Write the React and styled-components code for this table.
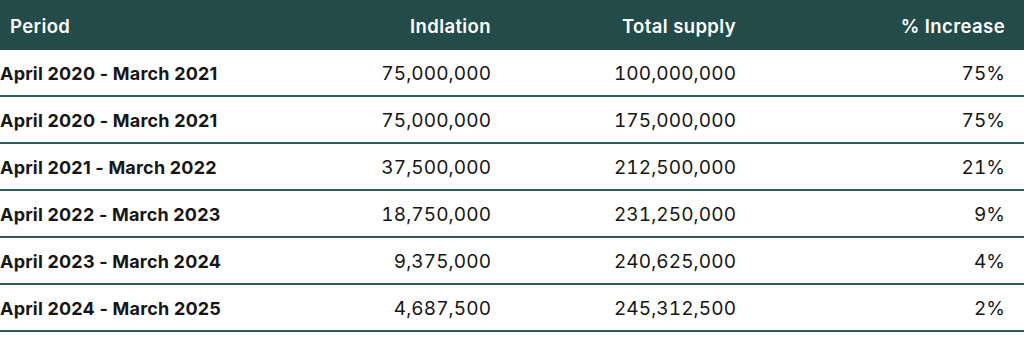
import React from "react";
import styled, { createGlobalStyle } from "styled-components";

const Global = createGlobalStyle`
  html, body { margin: 0; padding: 0; background: #ffffff; }
  body { font-family: Inter, "Noto Sans", sans-serif; -webkit-font-smoothing: antialiased; }
`;

const Table = styled.div`
  width: 1024px;
  display: grid;
  grid-template-columns: 250px 241px 245px 1fr;
`;

const Row = styled.div`
  display: contents;
`;

const HeadCell = styled.div`
  background: #234b49;
  color: #ffffff;
  height: 50px;
  box-sizing: border-box;
  padding-top: 2px;
  display: flex;
  align-items: center;
  justify-content: ${(p) => (p.$left ? "flex-start" : "flex-end")};
  padding-left: ${(p) => (p.$left ? "10px" : "0")};
  padding-right: ${(p) => (p.$last ? "19px" : "0")};
  font-size: 18.5px;
  font-weight: 600;
  letter-spacing: 0.4px;
`;

const Cell = styled.div`
  height: 47px;
  box-sizing: border-box;
  padding-top: 2px;
  border-bottom: 2px solid #2f5d5a;
  display: flex;
  align-items: center;
  justify-content: ${(p) => (p.$left ? "flex-start" : "flex-end")};
  padding-right: ${(p) => (p.$last ? "19px" : "0")};
  color: #161616;
`;

const Label = styled.span`
  font-size: 18px;
  font-weight: 700;
  letter-spacing: 0.2px;
`;

const Num = styled.span`
  font-size: 19px;
  font-weight: 400;
  font-variant-numeric: tabular-nums;
  letter-spacing: 0.1px;
  margin-right: -0.1px;
`;

const rows = [
  ["April 2020 - March 2021", "75,000,000", "100,000,000", "75%"],
  ["April 2020 - March 2021", "75,000,000", "175,000,000", "75%"],
  ["April 2021 - March 2022", "37,500,000", "212,500,000", "21%"],
  ["April 2022 - March 2023", "18,750,000", "231,250,000", "9%"],
  ["April 2023 - March 2024", "9,375,000", "240,625,000", "4%"],
  ["April 2024 - March 2025", "4,687,500", "245,312,500", "2%"],
];

export default function App() {
  return (
    <>
      <Global />
      <Table>
        <Row>
          <HeadCell $left>Period</HeadCell>
          <HeadCell>Indlation</HeadCell>
          <HeadCell>Total supply</HeadCell>
          <HeadCell $last>% Increase</HeadCell>
        </Row>
        {rows.map((r, i) => (
          <Row key={i}>
            <Cell $left>
              <Label>{r[0]}</Label>
            </Cell>
            <Cell>
              <Num>{r[1]}</Num>
            </Cell>
            <Cell>
              <Num>{r[2]}</Num>
            </Cell>
            <Cell $last>
              <Num>{r[3]}</Num>
            </Cell>
          </Row>
        ))}
      </Table>
    </>
  );
}
